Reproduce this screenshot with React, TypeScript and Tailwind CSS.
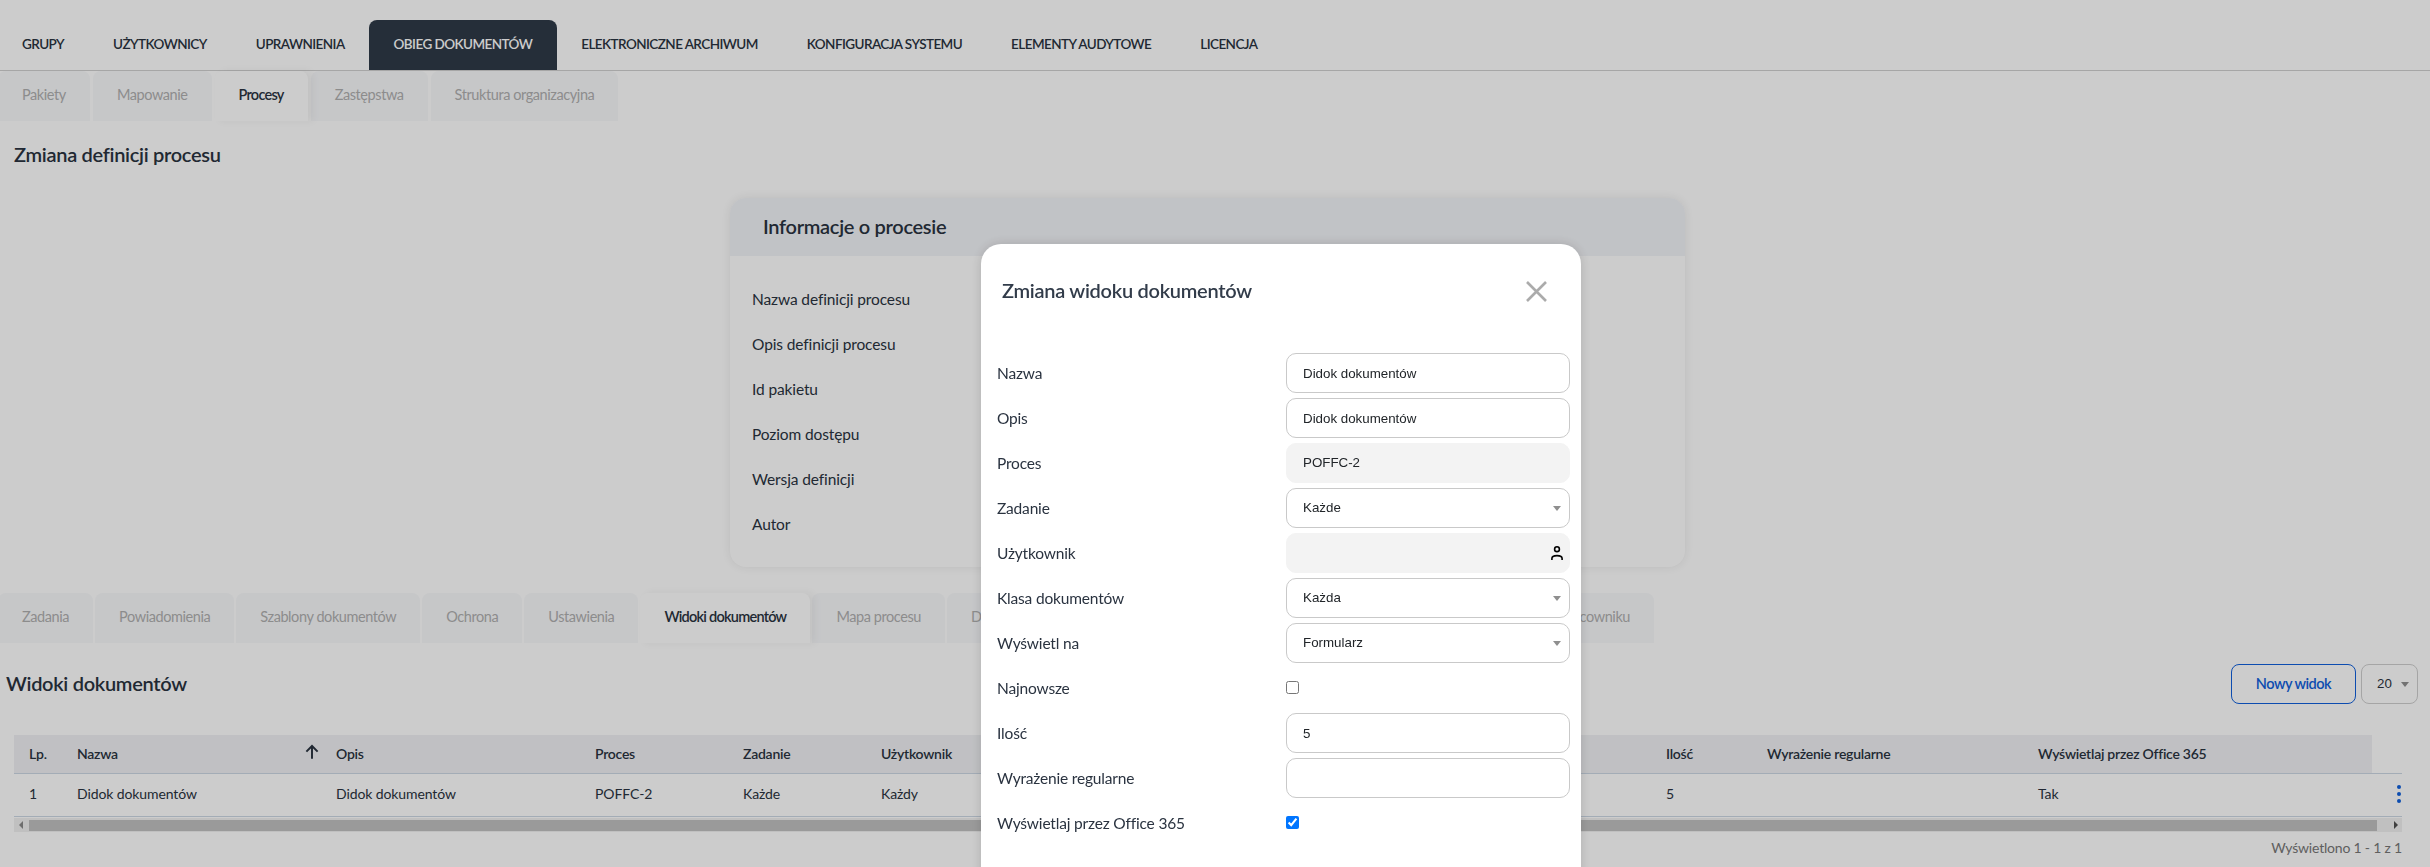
const font = "font-['Lato','Liberation_Sans',sans-serif]";

const topTabs = ["Grupy", "Użytkownicy", "Uprawnienia", "Obieg dokumentów", "Elektroniczne archiwum", "Konfiguracja systemu", "Elementy audytowe", "Licencja"];
const subTabs = ["Pakiety", "Mapowanie", "Procesy", "Zastępstwa", "Struktura organizacyjna"];
const infoRows = ["Nazwa definicji procesu", "Opis definicji procesu", "Id pakietu", "Poziom dostępu", "Wersja definicji", "Autor"];

const Tab = ({ label, active }: { label: string; active?: boolean }) => (
  <div
    className={
      active
        ? "relative z-10 flex h-[50px] items-center rounded-t-lg bg-white px-6 pb-[3px] text-[14.5px] font-semibold tracking-[-0.75px] text-[#2a3340] shadow-[5px_0_8px_rgba(0,0,0,0.05)]"
        : "flex h-[50px] items-center rounded-t-lg bg-[#f8f9fb] px-6 pb-[3px] text-[14.5px] tracking-[-0.42px] text-[#b0b0b0]"
    }
  >
    {label}
  </div>
);

const Caret = () => (
  <span className="h-0 w-0 border-x-[4px] border-t-[5px] border-x-transparent border-t-[#8f8f8f]" />
);

const Field = ({ label, children }: { label: string; children: React.ReactNode }) => (
  <div className="flex h-[45px] items-start">
    <label className="h-10 w-[305px] pl-[16px] text-[15.5px] leading-[40px] tracking-[-0.18px] text-[#2a3340]">{label}</label>
    {children}
  </div>
);

const boxBase = "h-10 w-[284px] rounded-[10px] border pl-4 pr-2 font-['Liberation_Sans',sans-serif] text-[13.33px] text-[#212529] outline-none";
const inputBox = boxBase + " border-[#c9c9c9] bg-white";
const disabledBox = boxBase + " flex items-center border-[#f3f3f3] bg-[#f3f3f3]";

const SelectBox = ({ value }: { value: string }) => (
  <div className={inputBox + " flex items-center justify-between"}>
    <span>{value}</span>
    <Caret />
  </div>
);

const cols = [
  ["Lp.", "1", "w-[48px]"],
  ["Nazwa", "Didok dokumentów", "w-[259px]"],
  ["Opis", "Didok dokumentów", "w-[259px]"],
  ["Proces", "POFFC-2", "w-[148px]"],
  ["Zadanie", "Każde", "w-[138px]"],
  ["Użytkownik", "Każdy", "w-[174px]"],
  ["Klasa dokumentów", "Każda", "w-[250px]"],
  ["Wyświetl na", "Formularz", "w-[150px]"],
  ["Najnowsze", "Nie", "w-[211px]"],
  ["Ilość", "5", "w-[101px]"],
  ["Wyrażenie regularne", "", "w-[271px]"],
  ["Wyświetlaj przez Office 365", "Tak", "w-[349px]"],
];

export default function App() {
  return (
    <div className={"relative h-[867px] overflow-hidden bg-white text-[#2a3340] " + font}>
      {/* top nav */}
      <div className="flex h-[71px] items-end border-b border-[#d0d0d0] pt-5">
        {topTabs.map((t, i) => (
          <div
            key={t}
            className={
              "flex h-[50px] items-center rounded-t-lg px-[24.5px] pb-[1px] text-[13.5px] font-semibold uppercase tracking-[-0.57px] " +
              (i === 0 ? "-ml-[2.5px] " : "") +
              (i === 3 ? "bg-[#2f3a48] text-white" : "text-[#2a3340]")
            }
          >
            {t}
          </div>
        ))}
      </div>
      <div className="-ml-[2px] flex gap-[3px]">
        {subTabs.map((t) => (
          <Tab key={t} label={t} active={t === "Procesy"} />
        ))}
      </div>
      <h1 className="mt-[21px] pl-[14px] text-[20px] font-semibold leading-6 tracking-[-0.3px]">Zmiana definicji procesu</h1>

      {/* process info card */}
      <div className="ml-[730px] mt-[32px] h-[369px] w-[955px] overflow-hidden rounded-2xl bg-white shadow-[0_0_10px_rgba(0,0,0,0.08)]">
        <div className="flex h-[58px] items-center bg-[#f2f4f8] pb-[3px] pl-[33px] text-[20px] font-semibold tracking-[-0.3px]">Informacje o procesie</div>
        <div className="pl-[22px] pt-[21px]">
          {infoRows.map((r) => (
            <div key={r} className="flex h-[45px] items-center text-[15.5px] tracking-[-0.12px]">{r}</div>
          ))}
        </div>
      </div>

      {/* lower tabs */}
      <div className="-ml-[2px] mt-[26px] flex w-[1656px] gap-[2px]">
        <Tab label="Zadania" />
        <Tab label="Powiadomienia" />
        <Tab label="Szablony dokumentów" />
        <Tab label="Ochrona" />
        <Tab label="Ustawienia" />
        <Tab label="Widoki dokumentów" active />
        <Tab label="Mapa procesu" />
        <Tab label="Dokumenty" />
        <div className="flex h-[50px] flex-1 items-center justify-end rounded-t-lg bg-[#f8f9fb] px-6 pb-[3px] text-[14.5px] tracking-[-0.42px] text-[#b0b0b0]">Dane o pracowniku</div>
      </div>

      <div className="mt-[21px] flex h-10 items-center justify-between pl-[6px] pr-3">
        <h2 className="pb-[3px] text-[20px] font-semibold tracking-[-0.3px]">Widoki dokumentów</h2>
        <div className="flex items-center gap-[5px]">
          <button className="h-10 w-[125px] rounded-lg border border-[#1060dc] text-[14.5px] font-semibold tracking-[-0.5px] text-[#1060dc]">Nowy widok</button>
          <div className="flex h-10 w-[57px] items-center justify-between rounded-lg border border-[#cfcfcf] pl-[15px] pr-2 font-['Liberation_Sans',sans-serif] text-[13.33px]">
            20
            <Caret />
          </div>
        </div>
      </div>

      {/* table */}
      <div className="ml-[14px] mt-[31px] w-[2388px]">
        <div className="flex h-[39px] items-center border-b border-[#ccd7e4]">
          <div className="flex h-full w-[2358px] items-center bg-[#f0f1f4] pb-[2px] text-[14px] font-semibold tracking-[-0.25px]">
            {cols.map(([h, , w]) => (
              <div key={h} className={"relative pl-[15px] " + w}>
                {h}
                {h === "Nazwa" && (
                  <svg viewBox="0 0 24 24" className="absolute right-0 top-0 h-[18px] w-[18px]" fill="none" stroke="currentColor" strokeWidth="2.6">
                    <path d="M12 21V4M4.5 11.5 12 4l7.5 7.5" />
                  </svg>
                )}
              </div>
            ))}
          </div>
        </div>
        <div className="flex h-[43px] items-center border-b border-[#ccd7e4] pb-[3px] text-[14px] tracking-[-0.1px]">
          {cols.map(([h, v, w]) => (
            <div key={h} className={"pl-[15px] " + w}>{v}</div>
          ))}
          <div className="flex w-[30px] flex-col items-end gap-[3px] pr-[1px]">
            <span className="h-1 w-1 rounded-full bg-[#1060dc]" />
            <span className="h-1 w-1 rounded-full bg-[#1060dc]" />
            <span className="h-1 w-1 rounded-full bg-[#1060dc]" />
          </div>
        </div>
        <div className="mt-[1px] flex h-[14px] items-center bg-[#f1f1f1]">
          <span className="ml-[5px] h-0 w-0 border-y-[4px] border-r-[4px] border-y-transparent border-r-[#8a8a8a]" />
          <div className="ml-[6px] h-[11px] w-[2348px] bg-[#c1c1c1]" />
          <span className="ml-[17px] h-0 w-0 border-y-[4px] border-l-[4px] border-y-transparent border-l-[#505050]" />
        </div>
        <div className="mt-[5px] text-right text-[14px] tracking-[-0.2px] text-[#777]">Wyświetlono 1 - 1 z 1</div>
      </div>

      {/* dialog */}
      <div className="fixed inset-0 z-20 bg-black/20">
        <div className="ml-[981px] mt-[244px] h-[700px] w-[600px] rounded-[20px] bg-white shadow-[0_0_12px_rgba(0,0,0,0.15)]">
          <div className="flex h-[95px] items-center justify-between pl-[21px] pr-[34px]">
            <h3 className="pb-[3px] text-[20px] font-semibold tracking-[-0.28px] text-[#323c4a]">Zmiana widoku dokumentów</h3>
            <svg viewBox="0 0 21 21" className="h-[21px] w-[21px]" fill="none" stroke="#ababab" strokeWidth="2.6">
              <path d="M1 1l19 19M20 1L1 20" />
            </svg>
          </div>
          <div className="pt-[14px]">
            <Field label="Nazwa"><input readOnly value="Didok dokumentów" className={inputBox} /></Field>
            <Field label="Opis"><input readOnly value="Didok dokumentów" className={inputBox} /></Field>
            <Field label="Proces"><div className={disabledBox}>POFFC-2</div></Field>
            <Field label="Zadanie"><SelectBox value="Każde" /></Field>
            <Field label="Użytkownik">
              <div className={disabledBox + " justify-end"}>
                <svg viewBox="0 0 12 14" className="-mr-[2px] h-[14px] w-[12px]" fill="none" stroke="#000" strokeWidth="1.6">
                  <circle cx="6" cy="3.2" r="2.4" />
                  <path d="M.9 14v-1.6C.9 10.6 3.5 9.6 6 9.6s5.1 1 5.1 2.8V14" />
                </svg>
              </div>
            </Field>
            <Field label="Klasa dokumentów"><SelectBox value="Każda" /></Field>
            <Field label="Wyświetl na"><SelectBox value="Formularz" /></Field>
            <Field label="Najnowsze"><input type="checkbox" readOnly className="m-0 mt-[13px] h-[13px] w-[13px] appearance-auto" /></Field>
            <Field label="Ilość"><input readOnly value="5" className={inputBox} /></Field>
            <Field label="Wyrażenie regularne"><input readOnly value="" className={inputBox} /></Field>
            <Field label="Wyświetlaj przez Office 365"><input type="checkbox" checked readOnly className="m-0 mt-[13px] h-[13px] w-[13px] appearance-auto" /></Field>
          </div>
        </div>
      </div>
    </div>
  );
}
